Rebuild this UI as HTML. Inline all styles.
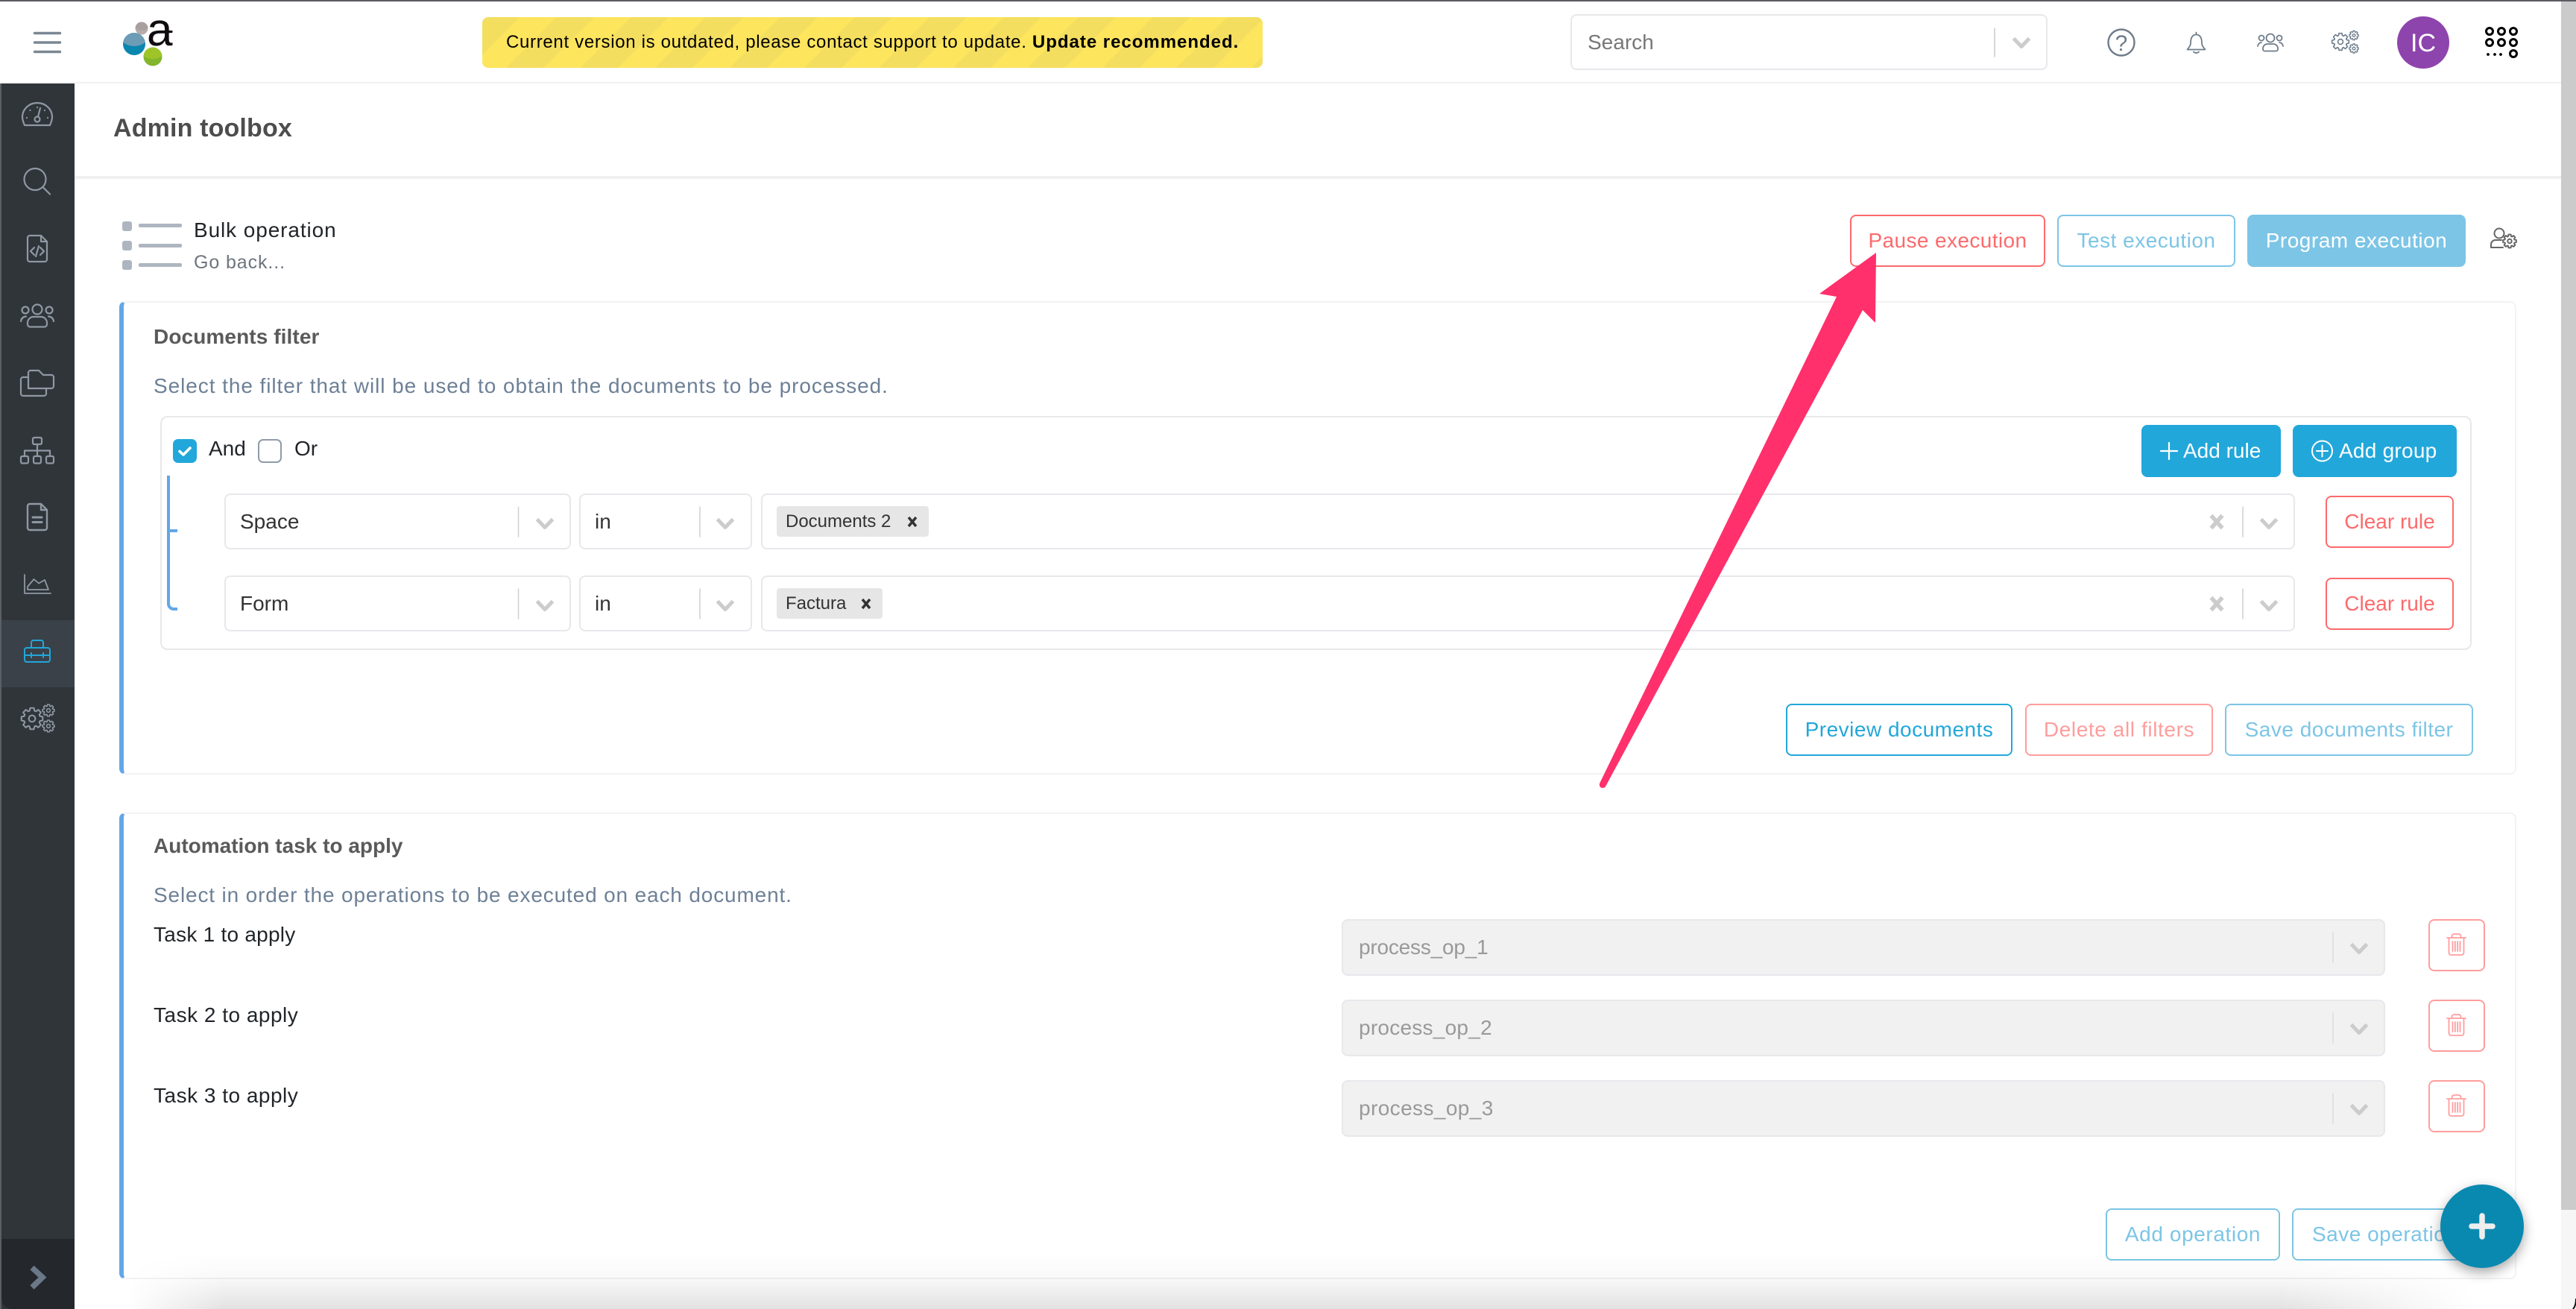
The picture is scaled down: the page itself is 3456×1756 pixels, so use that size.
<!DOCTYPE html>
<html lang="en"><head><meta charset="utf-8"><title>Admin toolbox</title>
<style>
html,body{margin:0;padding:0;width:3456px;height:1756px;overflow:hidden;background:#fff;font-family:"Liberation Sans",Arial,sans-serif;color:#212529}
.a{position:absolute;box-sizing:border-box}
.t{position:absolute;white-space:nowrap;line-height:0;font-size:28px;top:calc(var(--b) - .3465em)}
.sel{position:absolute;box-sizing:border-box;border:2px solid #e8e8ec;border-radius:8px;background:#fff}
.dis{background:#f1f1f1}
.btn{position:absolute;box-sizing:border-box;display:flex;align-items:center;justify-content:center;border:2px solid;border-radius:8px;font-size:28px;letter-spacing:.5px;background:#fff;white-space:nowrap;overflow:hidden}
.r{border-color:#fc6a6c;color:#fc6a6c}.lr{border-color:#ff9d9d;color:#ff9d9d}.lb{border-color:#7cc5e6;color:#7cc5e6}.b{border-color:#22a7da;color:#22a7da}
.card{position:absolute;box-sizing:border-box;left:160px;width:3216px;border:2px solid #f3f3f4;border-left:6px solid #62a7e7;border-radius:8px;background:#fff}
.h{font-weight:bold;color:#5a5a5a}.s{color:#6d8096;letter-spacing:.87px}
.chip{position:absolute;background:#e6e6e6;border-radius:4px;height:41px;left:1042px}
svg{position:absolute;left:0;top:0}
</style></head><body>

<!-- chrome -->
<div class="a" style="left:0;top:0;width:3456px;height:2px;background:#5c5c60"></div>
<div class="a" style="left:0;top:110px;width:3436px;height:2px;background:#f0f0f0"></div>
<div class="a" style="left:100px;top:236px;width:3336px;height:4px;background:#f0f0f0"></div>
<div class="a" style="left:3436px;top:1623px;width:20px;height:133px;background:#f6f6f6"></div>
<div class="a" style="left:3436px;top:2px;width:20px;height:1621px;background:#cbcbcb"></div>

<!-- sidebar -->
<div class="a" style="left:0;top:112px;width:100px;height:1644px;background:#30353a;border-left:2px solid #5c5f64"></div>
<div class="a" style="left:2px;top:832px;width:98px;height:90px;background:#3a4149"></div>
<div class="a" style="left:2px;top:1662px;width:98px;height:94px;background:#24282c;border-bottom-left-radius:14px"></div>

<!-- banner -->
<div class="a" style="left:647px;top:23px;width:1047px;height:68px;border-radius:8px;background:repeating-linear-gradient(135deg,#f4de5f 0 35.36px,#fee55e 35.36px 70.71px)"></div>
<span class="t" style="left:679px;--b:65px;font-size:24px;color:#000;letter-spacing:.68px">Current version is outdated, please contact support to update. <b style="letter-spacing:.98px">Update recommended.</b></span>

<!-- search -->
<div class="sel" style="left:2107px;top:19px;width:640px;height:75px"></div>
<span class="t" style="left:2130px;--b:67px;color:#777">Search</span>

<!-- titles -->
<span class="t" style="left:152px;--b:184px;font-size:34px;font-weight:bold;color:#4d4d4d;letter-spacing:.15px">Admin toolbox</span>
<span class="t" style="left:260px;--b:319px;letter-spacing:.9px">Bulk operation</span>
<span class="t" style="left:260px;--b:361px;font-size:25px;color:#6c757d;letter-spacing:.9px">Go back...</span>

<div class="btn r" style="left:2482px;top:288px;width:262px;height:70px;letter-spacing:.4px">Pause execution</div>
<div class="btn lb" style="left:2760px;top:288px;width:239px;height:70px">Test execution</div>
<div class="btn lb" style="left:3015px;top:288px;width:293px;height:70px;background:#7cc5e6;color:#fff">Program execution</div>

<!-- card 1 -->
<div class="card" style="top:404px;height:635px"></div>
<span class="t h" style="left:206px;--b:462px;letter-spacing:.1px">Documents filter</span>
<span class="t s" style="left:206px;--b:528px;letter-spacing:.93px">Select the filter that will be used to obtain the documents to be processed.</span>

<div class="a" style="left:215px;top:558px;width:3101px;height:314px;border:2px solid #e8e8ea;border-radius:10px"></div>
<div class="a" style="left:232px;top:589px;width:32px;height:32px;border-radius:7px;background:#22a7da"></div>
<span class="t" style="left:280px;--b:612px">And</span>
<div class="a" style="left:346px;top:589px;width:32px;height:32px;border-radius:7px;border:2px solid #8f9ba8;background:#fff"></div>
<span class="t" style="left:395px;--b:612px">Or</span>

<div class="a" style="left:2873px;top:570px;width:187px;height:70px;background:#22a7da;border-radius:8px"></div>
<span class="t" style="left:2929px;--b:615px;color:#fff">Add rule</span>
<div class="a" style="left:3076px;top:570px;width:220px;height:70px;background:#22a7da;border-radius:8px"></div>
<span class="t" style="left:3138px;--b:615px;color:#fff;letter-spacing:.25px">Add group</span>

<div class="sel" style="left:301px;top:662px;width:465px;height:75px"></div>
<div class="sel" style="left:777px;top:662px;width:232px;height:75px"></div>
<div class="sel" style="left:1021px;top:662px;width:2058px;height:75px"></div>
<div class="sel" style="left:301px;top:772px;width:465px;height:75px"></div>
<div class="sel" style="left:777px;top:772px;width:232px;height:75px"></div>
<div class="sel" style="left:1021px;top:772px;width:2058px;height:75px"></div>
<span class="t" style="left:322px;--b:710px;color:#333">Space</span>
<span class="t" style="left:798px;--b:710px;color:#333">in</span>
<span class="t" style="left:322px;--b:820px;color:#333">Form</span>
<span class="t" style="left:798px;--b:820px;color:#333">in</span>
<div class="chip" style="top:679px;width:204px"></div>
<span class="t" style="left:1054px;--b:708px;font-size:24px;color:#333">Documents 2</span>
<div class="chip" style="top:789px;width:142px"></div>
<span class="t" style="left:1054px;--b:818px;font-size:24px;color:#333">Factura</span>
<div class="btn r" style="left:3120px;top:665px;width:172px;height:70px;letter-spacing:0">Clear rule</div>
<div class="btn r" style="left:3120px;top:775px;width:172px;height:70px;letter-spacing:0">Clear rule</div>

<div class="btn b" style="left:2396px;top:944px;width:304px;height:70px">Preview documents</div>
<div class="btn lr" style="left:2717px;top:944px;width:252px;height:70px;letter-spacing:.6px">Delete all filters</div>
<div class="btn lb" style="left:2985px;top:944px;width:333px;height:70px">Save documents filter</div>

<!-- card 2 -->
<div class="card" style="top:1090px;height:626px"></div>
<span class="t h" style="left:206px;--b:1145px">Automation task to apply</span>
<span class="t s" style="left:206px;--b:1211px;letter-spacing:.85px">Select in order the operations to be executed on each document.</span>
<span class="t" style="left:206px;--b:1264px;letter-spacing:.25px">Task 1 to apply</span>
<span class="t" style="left:206px;--b:1372px;letter-spacing:.5px">Task 2 to apply</span>
<span class="t" style="left:206px;--b:1480px;letter-spacing:.5px">Task 3 to apply</span>

<div class="sel dis" style="left:1800px;top:1233px;width:1400px;height:76px"></div>
<div class="sel dis" style="left:1800px;top:1341px;width:1400px;height:76px"></div>
<div class="sel dis" style="left:1800px;top:1449px;width:1400px;height:76px"></div>
<span class="t" style="left:1823px;--b:1281px;color:#999;letter-spacing:-.2px">process_op_1</span>
<span class="t" style="left:1823px;--b:1389px;color:#999;letter-spacing:.25px">process_op_2</span>
<span class="t" style="left:1823px;--b:1497px;color:#999;letter-spacing:.4px">process_op_3</span>
<div class="btn lr" style="left:3258px;top:1233px;width:76px;height:70px"></div>
<div class="btn lr" style="left:3258px;top:1341px;width:76px;height:70px"></div>
<div class="btn lr" style="left:3258px;top:1449px;width:76px;height:70px"></div>

<div class="btn lb" style="left:2825px;top:1621px;width:234px;height:70px;letter-spacing:.6px">Add operation</div>
<div class="btn lb" style="left:3075px;top:1621px;width:243px;height:70px;justify-content:flex-start;padding-left:25px">Save operation</div>

<!-- icons -->
<svg width="3456" height="1756" viewBox="0 0 3456 1756" fill="none" stroke-linecap="round" stroke-linejoin="round">
<defs>
<path id="th" d="M7.02-2.91L7.27-2.22L9.85-1.74V1.74L7.27 2.22L7.02 2.91"/>
<g id="gear"><use href="#th"/><use href="#th" transform="rotate(45)"/><use href="#th" transform="rotate(90)"/><use href="#th" transform="rotate(135)"/><use href="#th" transform="rotate(180)"/><use href="#th" transform="rotate(225)"/><use href="#th" transform="rotate(270)"/><use href="#th" transform="rotate(315)"/><circle r="3"/></g>
<path id="chev" d="M-10.500-5.500L0 5.500L10.500-5.500" stroke="#cccccc" stroke-width="5" stroke-linecap="butt"/>
<path id="x" d="M-7.500-8.500L7.500 8.500M7.500-8.500L-7.500 8.500" stroke="#cccccc" stroke-width="5.500" stroke-linecap="butt"/>
<path id="xk" d="M-5-6L5 6M5-6L-5 6" stroke="#333" stroke-width="3.500" stroke-linecap="butt"/>
<g id="trash" stroke="#ff9d9d" stroke-width="1.800"><path d="M-12.500 5H12.500M-6 5V3a3 3 0 0 1 3-3H3a3 3 0 0 1 3 3V5M-10 5V25a3 3 0 0 0 3 3H7a3 3 0 0 0 3-3V5M-5 10V23M-1.700 10V23M1.700 10V23M5 10V23"/></g>
<clipPath id="cb"><circle cx="180" cy="59" r="15"/></clipPath>
<clipPath id="cg"><circle cx="205" cy="76" r="12.5"/></clipPath>
<clipPath id="cy"><circle cx="190" cy="38" r="8.5"/></clipPath>
</defs>

<!-- hamburger -->
<path d="M46.500 44.500H80.500M46.500 57H80.500M46.500 69.500H80.500" stroke="#7b8794" stroke-width="3.400"/>

<!-- logo -->
<circle cx="190" cy="38" r="8.500" fill="#b5acab"/>
<ellipse cx="190" cy="31" rx="11" ry="10" fill="#a89f9e" clip-path="url(#cy)"/>
<circle cx="180" cy="59" r="15" fill="#0a87ae"/>
<ellipse cx="180" cy="48" rx="19" ry="14" fill="#6c9cb6" clip-path="url(#cb)"/>
<circle cx="205" cy="76" r="12.500" fill="#83b52d"/>
<ellipse cx="205" cy="68" rx="16" ry="11" fill="#9fc42a" clip-path="url(#cg)"/>
<text x="197" y="61" font-size="62" font-family="Liberation Sans" fill="#0f0b0f" stroke="none">a</text>
<path d="M214 42.500H230" stroke="#0f0b0f" stroke-width="3.200"/>

<!-- sidebar icons -->
<g stroke="#8f98a3" stroke-width="2.200">
<path d="M33 168Q30 161 30 157A20 19 0 0 1 70 157Q70 161 67 168Z"/><circle cx="50" cy="160" r="3.500"/><path d="M51 156.500L54 145M36 158V158M40.500 148V148M50 144V144M60 148V148M64 158V158"/>
<circle cx="47" cy="240.500" r="14.500"/><path d="M57.500 251L67 260.500"/>
<path d="M40 316H55L63 324V348a3 3 0 0 1-3 3H40a3 3 0 0 1-3-3V319a3 3 0 0 1 3-3ZM55 316V324H63M46 332L41 337L46 342M54 332L59 337L54 342M52 330L48 344"/>
<circle cx="50" cy="415" r="6.500"/><circle cx="34" cy="416" r="4.500"/><circle cx="66" cy="416" r="4.500"/><path d="M37 433a8 8 0 0 1 8-8H55a8 8 0 0 1 8 8V435a3.500 3.500 0 0 1-3.500 3.500H40.500A3.500 3.500 0 0 1 37 435ZM28 431Q29 425 35 424.500M72 431Q71 425 65 424.500"/>
<path d="M38 521V500a3 3 0 0 1 3-3H52L58 503H69a3 3 0 0 1 3 3V518a3 3 0 0 1-3 3ZM37 506H31a3 3 0 0 0-3 3V528a3 3 0 0 0 3 3H59a3 3 0 0 0 3-3V522"/>
<rect x="44" y="587" width="12" height="9" rx="2"/><rect x="28" y="612" width="10" height="9.500" rx="2"/><rect x="45" y="612" width="10" height="9.500" rx="2"/><rect x="62" y="612" width="10" height="9.500" rx="2"/><path d="M50 596V612M33 612V604.500H67V612"/>
<path d="M40 676H55L63 684V708a3 3 0 0 1-3 3H40a3 3 0 0 1-3-3V679a3 3 0 0 1 3-3ZM55 676V684H63" stroke-width="2.400"/><path d="M44 694H56M44 700.500H56" stroke-width="3"/>
<path d="M33 771V796H68M37 791V787L45.500 777L52 782.500L60 778L65 791Z" stroke-width="1.800"/>
<g transform="translate(43,964) scale(1.45)" stroke-width="1.400"><use href="#gear"/></g>
<g transform="translate(65,953) scale(.8)" stroke-width="2"><use href="#gear"/></g>
<g transform="translate(65,974) scale(.8)" stroke-width="2"><use href="#gear"/></g>
</g>
<g stroke="#22a7da" stroke-width="2">
<rect x="33" y="869" width="34" height="19" rx="3"/><path d="M42 869V862a3 3 0 0 1 3-3H55a3 3 0 0 1 3 3V869M33 879H67M42 876V882M58 876V882"/>
</g>
<path d="M43 1700.500L57 1713.500L43 1727" stroke="#6a7888" stroke-width="7.500" stroke-linecap="butt" stroke-linejoin="miter"/>

<!-- top right icons -->
<path d="M2676 38V76" stroke="#cccccc" stroke-width="1.500"/><use href="#chev" x="2712" y="57"/>
<circle cx="2846" cy="57" r="17.500" stroke="#6e7c8a" stroke-width="2.400"/>
<text x="2846" y="68" text-anchor="middle" font-size="30" font-family="Liberation Sans" fill="#6e7c8a" stroke="none">?</text>
<g stroke="#6e7c8a" stroke-width="1.800">
<path d="M2946.500 46.500C2940.500 46.500 2939 52 2939 58C2939 62 2936.500 63.500 2934.500 66.500H2958.500C2956.500 63.500 2954 62 2954 58C2954 52 2952.500 46.500 2946.500 46.500ZM2946.500 43.500V46.500M2943 69.500a4 3 0 0 0 7 0"/>
<circle cx="3046" cy="51" r="5.500"/><circle cx="3034" cy="51" r="3.500"/><circle cx="3058" cy="51" r="3.500"/><path d="M3036 65a6 6 0 0 1 6-6H3050a6 6 0 0 1 6 6V66a2.500 2.500 0 0 1-2.500 2.500H3038.500A2.500 2.500 0 0 1 3036 66ZM3029 62Q3030 57 3034 57M3063 62Q3062 57 3058 57"/>
<g transform="translate(3140,56) scale(1.15)" stroke-width="1.400"><use href="#gear"/></g>
<g transform="translate(3158,47.500) scale(.62)" stroke-width="2.200"><use href="#gear"/></g>
<g transform="translate(3158,65) scale(.62)" stroke-width="2.200"><use href="#gear"/></g>
</g>
<circle cx="3251" cy="57" r="35" fill="#8e44ad"/>
<text x="3251" y="69" text-anchor="middle" font-size="34" font-family="Liberation Sans" fill="#fff" stroke="none">IC</text>
<g stroke="#000" stroke-width="3">
<circle cx="3340" cy="42" r="4.500"/><circle cx="3356" cy="42" r="4.500"/><circle cx="3372" cy="42" r="4.500"/>
<circle cx="3340" cy="57" r="4.500"/><circle cx="3356" cy="57" r="4.500"/><circle cx="3372" cy="57" r="4.500"/>
<circle cx="3372" cy="72" r="4.500"/>
<path d="M3338 73V73M3347 73V73M3355 73V73" stroke-width="3.800"/>
</g>

<!-- list icon -->
<g fill="#adb6c0" stroke="none"><rect x="164" y="297" width="13" height="13" rx="3"/><rect x="164" y="323" width="13" height="13" rx="3"/><rect x="164" y="349" width="13" height="13" rx="3"/>
<rect x="186" y="300" width="58" height="5" rx="2"/><rect x="186" y="327" width="58" height="5" rx="2"/><rect x="186" y="353" width="58" height="5" rx="2"/></g>

<!-- user gear -->
<g stroke="#666" stroke-width="2">
<circle cx="3353" cy="313" r="6.500"/><path d="M3342 332V328a6 6 0 0 1 6-6H3356M3342 332H3358"/>
<g transform="translate(3367,323.500) scale(.9)" stroke-width="2.200"><use href="#gear"/></g>
</g>

<!-- query builder -->
<path d="M241 605.500L246 610L255 601" stroke="#fff" stroke-width="3.600"/>
<path d="M226 638V810a7 7 0 0 0 7 7H238M226 712H238" stroke="#62a7e7" stroke-width="4" stroke-linecap="butt"/>
<path d="M2899 605H2921M2910 594V616" stroke="#fff" stroke-width="2.200"/>
<circle cx="3115.500" cy="605" r="13.500" stroke="#fff" stroke-width="2"/><path d="M3108 605H3123M3115.500 597.500V612.500" stroke="#fff" stroke-width="2"/>

<g stroke="#cfcfcf" stroke-width="1.500">
<path d="M695.500 680V720M939 680V720M3009 680V720M695.500 790V830M939 790V830M3009 790V830"/>
</g>
<use href="#chev" x="731" y="702"/><use href="#chev" x="973" y="702"/><use href="#chev" x="3044" y="702"/>
<use href="#chev" x="731" y="812"/><use href="#chev" x="973" y="812"/><use href="#chev" x="3044" y="812"/>
<use href="#x" x="2974" y="700"/><use href="#x" x="2974" y="810"/>
<use href="#xk" x="1224" y="700"/><use href="#xk" x="1162" y="810"/>

<!-- task rows -->
<path d="M3130 1251V1291M3130 1359V1399M3130 1467V1507" stroke="#dcdcdc" stroke-width="1.500"/>
<use href="#chev" x="3165" y="1272"/><use href="#chev" x="3165" y="1380"/><use href="#chev" x="3165" y="1488"/>
<use href="#trash" x="3295.500" y="1253"/><use href="#trash" x="3295.500" y="1361"/><use href="#trash" x="3295.500" y="1469"/>
</svg>

<!-- bottom shadow -->
<div class="a" style="left:170px;top:1680px;width:3150px;height:76px;background:linear-gradient(to bottom,rgba(0,0,0,0) 0,rgba(0,0,0,.01) 20px,rgba(0,0,0,.03) 37px,rgba(0,0,0,.115) 76px);-webkit-mask-image:linear-gradient(to right,transparent 0,#000 130px,#000 2890px,transparent 3150px);mask-image:linear-gradient(to right,transparent 0,#000 130px,#000 2890px,transparent 3150px)"></div>

<!-- FAB + annotation arrow -->
<div class="a" style="left:3274px;top:1589px;width:112px;height:112px;border-radius:50%;background:#0a89b0;box-shadow:0 6px 16px rgba(0,0,0,.35)"></div>
<svg width="3456" height="1756" viewBox="0 0 3456 1756" fill="none">
<path d="M3330 1631V1659M3316 1645H3344" stroke="#eeeeee" stroke-width="7.500" stroke-linecap="round"/>
<path d="M2517 339L2516 433L2499 416L2153.500 1056Q2150 1058 2147 1056Q2145 1053 2146.500 1050L2464 398L2441 394Z" fill="#ff306b"/>
<path d="M3452 1756Q3456 1752 3456 1742" stroke="#111" stroke-width="2"/>
</svg>
</body></html>
